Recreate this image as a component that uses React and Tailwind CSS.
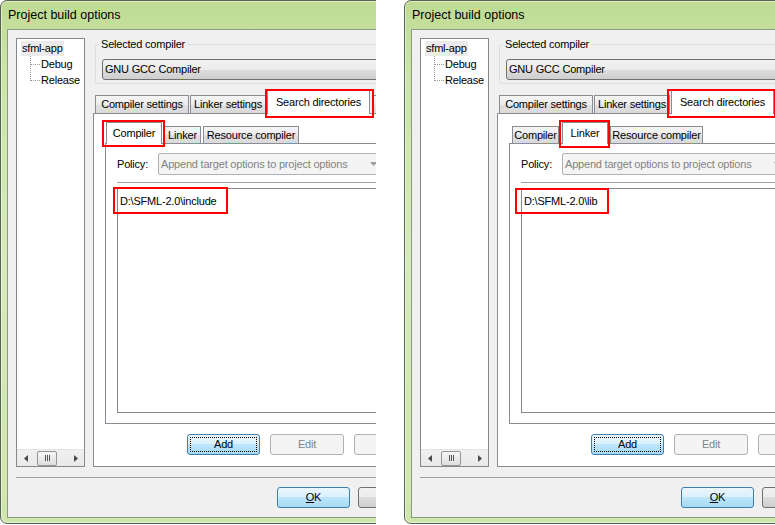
import React from "react";

const btnNormal =
  "border-[#707070] bg-[linear-gradient(#f2f2f2,#ebebeb_50%,#dddddd_50%,#cfcfcf)] text-black";
const btnBlue =
  "border-[#3c7fb1] bg-[linear-gradient(#eaf6fd,#d9f0fc_50%,#bee6fd_50%,#a7d9f5)] text-black";
const btnOff = "border-[#adb2b5] bg-[#f4f4f4] text-[#838383]";
const tabOff =
  "border-[#898c95] bg-[linear-gradient(#f5f5f5,#ececec_50%,#e0e0e0_50%,#dadada)]";

function Arrow({ dir }) {
  return (
    <svg width="4" height="7" viewBox="0 0 4 7">
      {dir === "left" ? (
        <path d="M4 0 L0 3.5 L4 7 Z" fill="#4a4a4a" />
      ) : (
        <path d="M0 0 L4 3.5 L0 7 Z" fill="#4a4a4a" />
      )}
    </svg>
  );
}

function TreeChild({ label, last }) {
  return (
    <div className="ml-[4px] flex h-[16px] items-center">
      <svg width="20" height="16" shapeRendering="crispEdges">
        <line
          x1="9.5"
          y1="0"
          x2="9.5"
          y2={last ? 9 : 16}
          stroke="#9a9a9a"
          strokeDasharray="1 1"
        />
        <line x1="10" y1="8.5" x2="19" y2="8.5" stroke="#9a9a9a" strokeDasharray="1 1" />
      </svg>
      <span className="leading-[13px]">{label}</span>
    </div>
  );
}

function Tree() {
  return (
    <div className="flex h-[429px] w-[69px] shrink-0 flex-col border border-[#828790] bg-white">
      <div className="ml-[4px] mt-[1px] flex h-[16px] items-center">
        <span className="bg-[#ebebeb] px-[1px] leading-[15px]">sfml-app</span>
      </div>
      <TreeChild label="Debug" />
      <TreeChild label="Release" last />
      <div className="mt-auto flex h-[17px] items-center border-t border-[#e3e3e3] bg-[linear-gradient(#f0f0f0,#e9e9e9)]">
        <div className="flex w-[17px] justify-center">
          <Arrow dir="left" />
        </div>
        <div className="ml-[3px] flex h-[15px] w-[20px] items-center justify-center gap-[1px] rounded-[2px] border border-[#959595] bg-[linear-gradient(#f6f6f6,#dedede)]">
          <div className="h-[6px] w-px bg-[#555]" />
          <div className="h-[6px] w-px bg-[#555]" />
          <div className="h-[6px] w-px bg-[#555]" />
        </div>
        <div className="ml-auto flex w-[17px] justify-center">
          <Arrow dir="right" />
        </div>
      </div>
    </div>
  );
}

function Dialog({ v }) {
  return (
    <div className="flex h-[524px] w-[560px] shrink-0 flex-col rounded-l-[7px] border border-[#56634f] bg-[linear-gradient(180deg,#bedb94_0%,#cce5a6_14%,#d6ebba_50%,#cfe6ab_100%)] font-['Liberation_Sans',Arial,sans-serif] text-[11px] tracking-[-0.2px] text-black shadow-[inset_0_0_0_1px_rgba(255,255,255,0.5)]">
      <div className="flex h-[28px] items-center pl-[7px] text-[12.5px] tracking-normal">
        Project build options
      </div>
      <div className="ml-[6px] flex h-[489px] flex-col border-y border-l border-[#8b9a84] bg-[#f0f0f0]">
        <div className="ml-[8px] mt-[8px] flex items-start">
          <Tree />
          <div className="ml-[8px] flex w-[440px] flex-col">
            <fieldset className="ml-[2px] w-[420px] rounded-[3px] border border-[#d5dfe5] pb-[3px]">
              <legend className="ml-[3px] px-[2px] leading-[13px]">Selected compiler</legend>
              <div className={`ml-[6px] mt-[8px] flex h-[21px] w-[300px] items-center rounded-[3px] border pl-[2px] ${btnNormal}`}>
                GNU GCC Compiler
              </div>
            </fieldset>

            <div className="mt-[6px] flex h-[23px] items-end">
              <div className={`ml-[2px] flex h-[18px] w-[94px] items-center justify-center border border-b-0 ${tabOff}`}>
                Compiler settings
              </div>
              <div className={`ml-[1px] flex h-[18px] w-[76px] items-center justify-center border border-b-0 ${tabOff}`}>
                Linker settings
              </div>
              <div className="relative z-10 -mb-px ml-[1px] flex h-[24px] w-[103px] justify-center border border-b-0 border-[#898c95] bg-white pt-[5px] leading-[13px]">
                Search directories
                <div className={`pointer-events-none absolute h-[29px] w-[109px] border-2 border-[#ff0000] ${v.searchBox}`} />
              </div>
              <div className={`ml-[3px] flex h-[18px] w-[116px] items-center justify-center border border-b-0 ${tabOff}`}>
                Pre/post build steps
              </div>
            </div>

            <div className="flex h-[354px] w-[440px] flex-col border border-[#898c95] bg-white">
              <div className="ml-[11px] mt-[8px] flex h-[21px] items-end">
                {v.innerTabs.map((t) =>
                  t.sel ? (
                    <div
                      key={t.label}
                      className={`relative z-10 -mb-px flex h-[22px] justify-center border border-b-0 border-[#898c95] bg-white pt-[4px] leading-[13px] ${t.cls}`}
                    >
                      {t.label}
                      <div className={`pointer-events-none absolute border-2 border-[#ff0000] ${v.innerBox}`} />
                    </div>
                  ) : (
                    <div
                      key={t.label}
                      className={`flex h-[17px] items-center justify-center border border-b-0 ${tabOff} ${t.cls}`}
                    >
                      {t.label}
                    </div>
                  )
                )}
              </div>
              <div className="ml-[11px] flex h-[281px] w-[420px] flex-col border border-[#898c95] bg-white">
                <div className="ml-[11px] mt-[9px] flex h-[22px] items-center">
                  <span className="w-[41px]">Policy:</span>
                  <div className="flex h-[22px] w-[228px] items-center justify-between rounded-[2px] border border-[#adb2b5] bg-[#f4f4f4] pl-[2px] pr-[8px] text-[#838383]">
                    <span>Append target options to project options</span>
                    <svg width="7" height="4" viewBox="0 0 7 4">
                      <path d="M0 0 L7 0 L3.5 4 Z" fill="#a0a0a0" />
                    </svg>
                  </div>
                </div>
                <div className="ml-[11px] mt-[7px] h-px w-[400px] bg-[#a0a0a0]" />
                <div className="relative ml-[11px] mt-[5px] h-[225px] w-[400px] border border-[#828790] bg-white">
                  <div className="pl-[2px] pt-[6px] leading-[13px]">{v.path}</div>
                  <div className={`pointer-events-none absolute border-2 border-[#ff0000] ${v.pathBox}`} />
                </div>
              </div>
              <div className="ml-[93px] mt-[10px] flex gap-[10px]">
                <div className={`flex h-[21px] w-[73px] items-center justify-center rounded-[3px] border outline-1 outline-offset-[-4px] outline-dotted outline-black ${btnBlue}`}>
                  Add
                </div>
                <div className={`flex h-[21px] w-[74px] items-center justify-center rounded-[3px] border ${btnOff}`}>
                  Edit
                </div>
                <div className={`flex h-[21px] w-[74px] items-center justify-center rounded-[3px] border ${btnOff}`}>
                  Delete
                </div>
              </div>
            </div>
          </div>
        </div>

        <div className="ml-[8px] mt-[10px] h-px w-[530px] bg-[#a0a0a0]" />

        <div className="ml-[269px] mt-[9px] flex gap-[8px]">
          <div className={`flex h-[21px] w-[73px] items-center justify-center rounded-[3px] border ${btnBlue}`}>
            <span className="underline">O</span>K
          </div>
          <div className={`flex h-[21px] w-[73px] items-center justify-center rounded-[3px] border ${btnNormal}`}>
            Cancel
          </div>
        </div>
      </div>
    </div>
  );
}

const left = {
  path: "D:\\SFML-2.0\\include",
  searchBox: "-left-[3px] -top-[2px]",
  innerTabs: [
    { label: "Compiler", sel: true, cls: "ml-[1px] w-[56px]" },
    { label: "Linker", sel: false, cls: "ml-[2px] w-[37px]" },
    { label: "Resource compiler", sel: false, cls: "ml-[2px] w-[96px]" },
  ],
  innerBox: "-left-[5px] -top-[3px] h-[27px] w-[63px]",
  pathBox: "-left-[5px] -top-[2px] h-[27px] w-[115px]",
};

const right = {
  path: "D:\\SFML-2.0\\lib",
  searchBox: "-left-[5px] -top-[2px]",
  innerTabs: [
    { label: "Compiler", sel: false, cls: "ml-[3px] w-[47px]" },
    { label: "Linker", sel: true, cls: "ml-[3px] w-[46px]" },
    { label: "Resource compiler", sel: false, cls: "ml-[2px] w-[93px]" },
  ],
  innerBox: "-left-[4px] -top-[3px] h-[28px] w-[51px]",
  pathBox: "-left-[7px] -top-[1px] h-[26px] w-[94px]",
};

export default function App() {
  return (
    <div className="flex h-[525px] w-[775px] overflow-hidden bg-white">
      <div className="h-[525px] w-[376px] shrink-0 overflow-hidden">
        <Dialog v={left} />
      </div>
      <div className="w-[28px] shrink-0" />
      <div className="h-[525px] w-[371px] shrink-0 overflow-hidden">
        <Dialog v={right} />
      </div>
    </div>
  );
}
